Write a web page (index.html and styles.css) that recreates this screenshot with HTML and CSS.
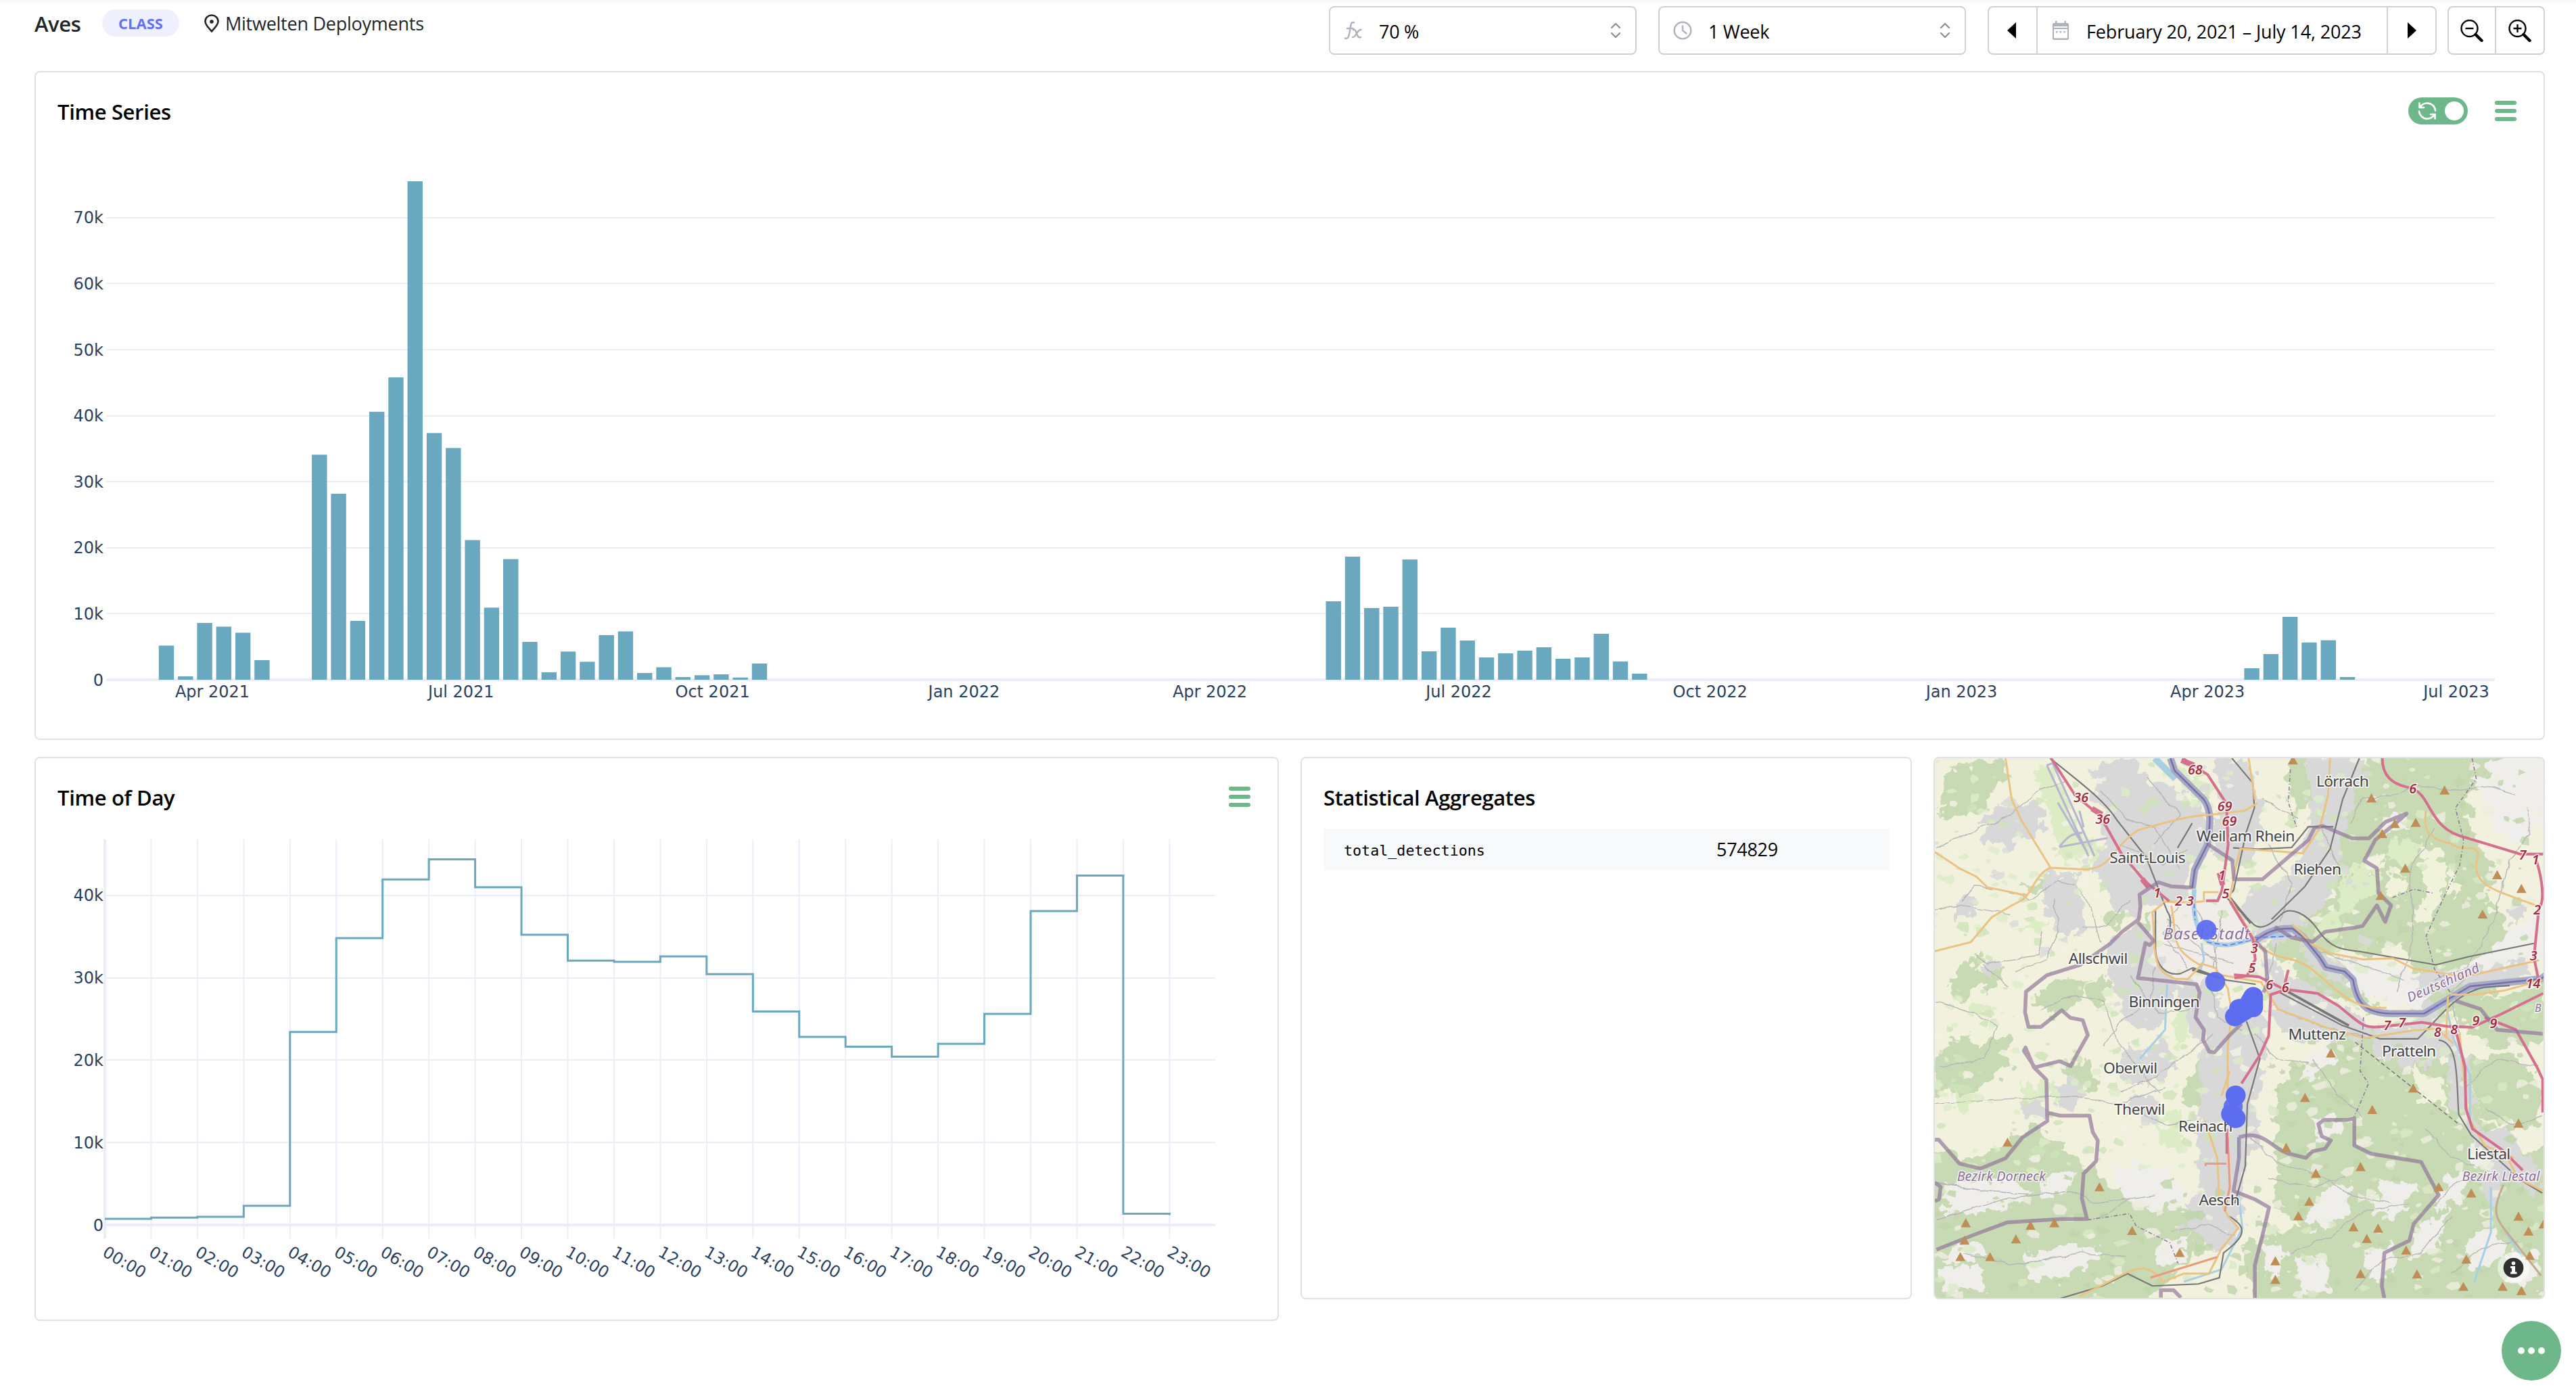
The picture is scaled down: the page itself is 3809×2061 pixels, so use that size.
FILE: index.html
```html
<!DOCTYPE html>
<html lang="en">
<head>
<meta charset="utf-8">
<title>Aves – Mitwelten Deployments</title>
<link rel="stylesheet" href="styles.css">
</head>
<body>
<header class="topbar">
  <div class="taxon">
    <span class="taxon-name">Aves</span>
    <span class="badge">CLASS</span>
    <svg class="pin" viewBox="0 0 22 27"><path d="M11 1.5C5.600 1.500 1.500 5.500 1.500 10.500c0 5.500 5 9.500 9.500 15 4.500-5.500 9.500-9.500 9.500-15 0-5-4.100-9-9.500-9z" fill="none" stroke="#212529" stroke-width="2.600"/><circle cx="11" cy="11" r="2.800" fill="#212529"/></svg>
    <span class="source">Mitwelten Deployments</span>
  </div>
  <div class="controls">
    <div class="select">
      <svg class="lead" viewBox="0 0 28 28" fill="none" stroke="#adb2bd" stroke-width="2.400" stroke-linecap="round" stroke-linejoin="round"><path d="M2 25.500c4 1 5-1 6-6L10.500 6c.6-3.500 2-4.500 4.500-3.800M5 11h8.500M14 13c3-1 3.600 1.500 5 5.500s2.400 6.500 6 5.500M25.500 13c-3-.5-5 3-6.500 5.500s-3.500 6-6 5.500"/></svg>
      <span class="value">70 %</span>
      <svg class="chev" viewBox="0 0 16 24" fill="none" stroke="#868e96" stroke-width="2.200" stroke-linecap="round" stroke-linejoin="round"><path d="M2 8l6-6 6 6M2 16l6 6 6-6"/></svg>
    </div>
    <div class="select">
      <svg class="lead" viewBox="0 0 28 28" fill="none" stroke="#adb2bd" stroke-width="2.400" stroke-linecap="round"><circle cx="14" cy="14" r="12.300"/><path d="M14 7.500V14l5.500 4.500"/></svg>
      <span class="value">1 Week</span>
      <svg class="chev" viewBox="0 0 16 24" fill="none" stroke="#868e96" stroke-width="2.200" stroke-linecap="round" stroke-linejoin="round"><path d="M2 8l6-6 6 6M2 16l6 6 6-6"/></svg>
    </div>
    <div class="group range">
      <div class="cell arrow prev"><svg viewBox="0 0 13 24"><path d="M13 0v24L0 12z"/></svg></div>
      <div class="cell dates">
        <svg class="cal" viewBox="0 0 24 28" fill="#adb2bd"><path fill-rule="evenodd" d="M4 0h2.500v3h11V0H20v3h2q2 0 2 2v21q0 2-2 2H2q-2 0-2-2V5q0-2 2-2h2zM2 8v2h20V8zM2 12v13.500h20V12z"/><path d="M5 15h2.500v2.500H5zM10.700 15h2.500v2.500h-2.500zM16.400 15h2.500v2.500h-2.500z"/></svg>
        <span class="value">February 20, 2021 – July 14, 2023</span>
      </div>
      <div class="cell arrow"><svg viewBox="0 0 13 24"><path d="M0 0v24l13-12z"/></svg></div>
    </div>
    <div class="group zoom">
      <div class="cell out"><svg viewBox="0 0 34 33" fill="none" stroke="#000"><circle cx="13.500" cy="13" r="12" stroke-width="2.400"/><path d="M7.500 13h12" stroke-width="2.400"/><path d="M22.500 22l9 9" stroke-width="4.400" stroke-linecap="round"/></svg></div>
      <div class="cell"><svg viewBox="0 0 34 33" fill="none" stroke="#000"><circle cx="13.500" cy="13" r="12" stroke-width="2.400"/><path d="M7.500 13h12M13.500 7v12" stroke-width="2.400"/><path d="M22.500 22l9 9" stroke-width="4.400" stroke-linecap="round"/></svg></div>
    </div>
  </div>
</header>
<main class="board">
  <section class="card series">
    <div class="card-head">
      <h2>Time Series</h2>
      <div class="tools">
        <div class="switch">
          <svg viewBox="0 0 28 28" fill="none" stroke="#fff" stroke-width="2.600" stroke-linecap="round" stroke-linejoin="round"><path d="M26 13.500C25.500 7 20 2.500 14 2.500c-4.500 0-8 2-10.500 6M2.500 2.500v6.500h6.500M2 14.500c.5 6.500 6 11 12 11 4.500 0 8-2 10.500-6M25.500 25.500V19H19"/></svg>
          <span class="knob"></span>
        </div>
        <div class="burger"><i></i><i></i><i></i></div>
      </div>
    </div>
    <svg class="chart" id="series" viewBox="53 194 3708 898"></svg>
  </section>
  <div class="row">
    <section class="card daytime">
      <div class="card-head">
        <h2>Time of Day</h2>
        <div class="tools"><div class="burger"><i></i><i></i><i></i></div></div>
      </div>
      <svg class="chart" id="daytime" viewBox="53 1208 1836 743"></svg>
    </section>
    <section class="card stats">
      <div class="card-head"><h2>Statistical Aggregates</h2></div>
      <div class="stat-row"><code>total_detections</code><span>574829</span></div>
    </section>
    <section class="card map">
      <svg viewBox="34 33 1457 1306" preserveAspectRatio="none">
        <defs>
          <filter id="rough" x="-5%" y="-5%" width="110%" height="110%"><feTurbulence type="fractalNoise" baseFrequency=".035" numOctaves="3" seed="4"/><feDisplacementMap in="SourceGraphic" scale="55" xChannelSelector="R" yChannelSelector="G"/></filter>
          <filter id="wobble" x="-5%" y="-5%" width="110%" height="110%"><feTurbulence type="fractalNoise" baseFrequency=".03" numOctaves="2" seed="9"/><feDisplacementMap in="SourceGraphic" scale="14" xChannelSelector="R" yChannelSelector="G"/></filter>
        </defs>
        <rect width="1600" height="1500" fill="#f1f1de"/>
        <g filter="url(#rough)">
          <g fill="#c8dab4">
            <path d="M60 60l130-30 20 60-60 40-110 20zM90 110l70-10-10 60-110 20zM250 340l110-30-20 50-110-10zM140 500l60 30-20 60-120-10zM40 740l110-60 60 30 10 60-90 70-100 10zM60 600l50-60 40 20-40 60zM260 620l80-60 60 20-40 60-50 20zM390 600l50-50 20 30-30 60zM660 780l50-20 10 80-60 40-40-30zM340 780l70-20 20 60-60 30zM430 420l60-30-20 60zM500 460l60-60-20 70z"/>
            <path d="M1100 20h300l10 70-100 30 10 110 60 60-30 90 80 80-50 140-120 60-80-20 20-90-60-70-60 30-90-20-70 40-80-10-20-60 70-30 100-60-40-120 60-100-20-70zM890 30h50l20 90-50 40-40-60zM890 500l70 0 100 90 40 60-90-40-100-20z"/>
            <path d="M850 820l100-80 130-60 70 60 150 40 40 120 40 60 90 30 120-120v400l20 270H760l60-110-30-120-20-90 40-30 100-20-60-60z"/>
            <path d="M20 980l90 20 80-20 70-60 100 60 80 80 70 20 150 60 30 60-60 60-70 80-80 50-80-20-100 60H20z"/>
            <path d="M1260 640l240-60v140l-140 10zM1300 760l120-10 60 60v120l-140-30z"/>
          </g>
          <g fill="#f0eeea">
            <path d="M1380 20h120v160l-60 60-60-30-30-90-40-30 50-30zM1410 460l80-70v120l-160 70-70-20zM1010 510l120 20 120 50-50 60-120-20-50-40zM1140 160l30 40-60 20-20-20z"/>
            <path d="M960 1080l70-20-10 80-60 40-40-30zM1110 1050l80 20-30 60-80 10zM1180 1180l80-60-20 90-60 40zM820 1200l60 20-20 70-40-10zM900 1240l80 20 10 60-80 10zM1060 1230l70-20 0 70-60 20zM1310 1190l70-20 20 70-90 40zM1330 930l90 60-20 70-90-60zM920 760l60-40 20 40-90 60zM1260 1040l50 10-10 60-70 10zM1410 1230l70 0-10 70-60 0zM940 900l60 0 0 40-50 10z"/>
            <path d="M60 1060l150-10 60 30-90 40-120 20zM290 1050l80-10-30 50-50 10zM460 1010l130 20 60 60-80 40-90-40zM80 1210l80 10-30 30-70 10zM250 1230l120-20 70 20-90 60-90 10zM50 1270l90-10 20 60H50zM560 1210l80-20-10 60-60 20z"/>
          </g>
          <g fill="#dcecc5">
            <path d="M270 60l50-10 80 210-50 30zM330 230l120 10-30 40-90-10zM1000 330l70-50 30 60-90 80zM950 420l70-20-20 60-60 10zM1130 230l70 0-30 60-60-10zM480 560l30-20 10 90-40 20zM620 640l40 20-40 90-20-30zM610 40l70 60 20 50-60-30zM100 640l60-20 10 40zM240 830l80-20 10 40-80 20zM70 830l60 20-20 50zM560 900l60-20 20 90-60 10zM230 440l80-10-20 30zM790 420l50 0-20 40z"/>
          </g>
          <g fill="#f1f2dc">
            <path d="M1190 240l60 10 10 100-50 90-20-20 20-80zM1120 300l50 30-20 40-40-20zM1060 270l50 10-20 30zM930 40l50 0-20 130-30-20zM1260 300l40 40-30 30zM880 700l70-20-20 60-40 10zM1180 780l70 40 20 70-90-40zM700 1030l60 20-10 50zM120 540l50-50 30 30-40 40zM110 700l60-40 30 20-60 50z"/>
          </g>
          <g fill="#d8d8d8">
            <path d="M400 60l110-30 40 60 80 20 60 80 0 80-50 30 0 90-110-10-20 40-50-30-40-90-10-40 40-10-20-90zM930 30h130l-40 160-50 200-120 100-100-30 30-100 110-40 40-120zM700 40l80-10 40 130-10 80-30 60-80-40-20-70 50-30z"/>
            <path d="M420 500l110-60 50 60 20 100-40 100-60-20-50-130zM470 750l110-40 30 70-60 50-80-30zM500 850l60 0 10 70-70-20zM560 560l110-10 50 60-10 110-60-20-30-80zM690 640l130-10 10 90-30 160-20 120-20 200-60 30-70-60 40-90-10-140z"/>
            <path d="M820 520l110 60 130 90 20 40-190 10-50-60zM900 480l100 40 30 70-90-40zM1080 680l190 10 10 60-110 30-90-30zM1180 560l140-20 140-20-10 50-160 20-100 20zM1270 720l40 40 20 200-30-40-40-100zM1310 930l90 0 90 100-20 60-100-60zM1340 1040l60-20-20 120-40-60zM640 1110l90 20-20 60-70-20zM720 880l80-20 20 110-50 40-40-30z"/>
            <path d="M160 170l70-30 60 10 0 60-60 40-90-20zM290 310l80 0 10 60-40 60-50-30zM90 370l30-20 10 60-50 20zM320 370l60-20 10 100-60 10zM140 530l40 0-10 40zM1400 400l40-20-10 60zM320 820l70-10-10 60-50 10zM240 870l60-10 0 40-60 0zM1170 640l60-20 10 60-60 10z"/>
          </g>
          <path d="M560 400l100-30 80 0 60 90 10 100-60 20-80-10-50 10-60-60-10-70z" fill="#f0ece8"/>
        </g>
        <g id="patches"></g>
        <g fill="none" stroke="#b4b4b6" stroke-width="2.200" filter="url(#wobble)">
          <path d="M34 250l70-30 110-50 70-60 60-20M100 380l30-40 100 20 30 20 70-50 40 10 40 60 20 80M34 400l60-10 120 20M320 370l10 80-30 70-70 30M390 440l50 0 60-60M290 450l-10 60-120 20-30-20M150 530l60 60M34 620l90 30 60 30-30 80-110 20M34 870l120-10 200-10 120 20 110-40M290 640l70-30 80 10 30 100 100 120M480 840l90-40 130-100M440 730l40-60 70-50 10-80M520 890l70 30 60-10M690 560l20 100 60 30M660 400l40 70 10 80M720 400l-20 140M590 420l120 110M580 480l170 50M620 380l-40 80 60 80M830 240l60 100-30 90M960 200l50 120M900 180l-80-50M1030 190l30-60 80-10 40-20 100 10 80-10 60 20M1450 150l10 70-50 60-40 150-60 110-80 30M1230 200l-60 110 10 160-40 130M900 470l60 30 200 70M850 640l100 40 130 30M850 480l-20 100M1330 540l-60 60 20 110M40 1150l160-50 160-20 60 30 140-20M34 1060l120 20 130 10M100 1230l120 30 160-30 110 10M420 1150l80-50M790 950l60 60 100 30 80 50 100 20M830 1050l100 20 90-20M880 1230l100-40 80-60 110-20M1040 1320l60-70 100-20 70-90M1270 1280l70-60 90-20M1300 830l80-70 100 20M1350 880l70 40 70-20M1210 930l60 70 60 20M940 760l60 90 60 50M600 1180l90-20 60 30M800 700l50 60 80 10M500 560l70 90 80-10M430 110l60 70 70 20 60 100M540 80l80 90-60 70M480 240l100 50 60-40M1230 1120l50-60 80-10"/>
        </g>
        <g fill="none" stroke="#b7b6d0" stroke-width="5"><path d="M302 50l100 220M316 45l100 225M302 50l14-5M332 248c25-35 40-32 55-35M332 248l115-22M328 140l70 120M380 160l10 40"/></g>
        <g fill="none" stroke="#a9cfe2">
          <path d="M655 350c-6 60 6 110 40 130 40 12 70 0 110-14l80-6" stroke-width="11"/><path d="M672 480l6 40-10 30M760 1080l10 90-50 100-90 30M1255 620l20 90 40 90 0 120M1365 1070l0 110-40 120M590 580l-5 110-60 70M760 950l0 80M1400 1180l40 60" stroke-width="5"/>
          <path d="M560 33l50 50" stroke-width="16"/>
        </g>
        <g fill="none" stroke-linejoin="round">
          <path d="M598 33l10 30 70 70c20 30 15 60 8 110l-30 60-6 45M800 475c40-30 60-30 90-30l25 20 40 50 15 24 45 10 20 20c10 60 30 80 90 82h80l110-66 170-18 46-36" stroke="#a9a8c6" stroke-width="17"/>
          <path d="M598 33l10 30 70 70c20 30 15 60 8 110l-30 60-6 45M800 475c40-30 60-30 90-30l25 20 40 50 15 24 45 10 20 20c10 60 30 80 90 82h80l110-66 170-18 46-36" stroke="#7471a8" stroke-width="4"/>
        </g>
        <g fill="none" stroke="#6f7cf0" stroke-width="3" stroke-dasharray="12 7"><path d="M653 365l4 60M685 478l50 8 60-14M800 467l100-4M1225 640l40-26"/></g>
        <g fill="none" stroke="#777" stroke-width="3.500">
          <path d="M310 33c60 50 130 100 160 150l70 90 50 130c15 20 5 60-2 60M562 400v90c0 50 30 70 60 64l30-14 80 30 70 10M745 33l50 60 4 60-20 60-30 140-16 18 60 60c20 25 50 0 70-20s60-5 90 40 60 45 100 50l180 32 80-20 155-32M1050 33l-40 100-30 120-60 90-80 80M780 670l32 90-30 110-5 150-25 90M860 600l150 80 90 32h90c60-60 90-110 160-125l60-4M1240 715c50 5 42 100 48 180l30 50 120 110 50 30M650 190l-35 60M748 250l60 3 80-4 40-50h60M735 1140c60 30 30 60-10 90l-10 60-50 15-110 5-60-30-60 30-100 30"/>
          <path d="M1040 720l250 200" stroke-dasharray="10 6" stroke-width="2.500"/><path d="M650 545l70 20M740 370l50 62M865 590l160 90" stroke-width="6"/>
        </g>
        <g fill="none" stroke="#eac382" stroke-width="4.800">
          <path d="M203 33l15 100 23 50 70 115 60 3c90 10 80-50 150-94 70-20 120-35 170-37l85-10 30-18M34 260l60 40 40 20 25 25 95 20M310 298c-40 20-40 60-70 80l-20 10-50 30-50 60-86 22M254 365l-10-4M580 380l70 2 28-3v-22h35M580 385l-25 20 5 90c5 50 20 60 50 72h30l30-32M600 390c15 70-10 100 72 145M670 530l35 10 30 50 10 60-10 80v120M785 33l15 100M980 33l-5 90-20 80-40 60-80-6-70-5-10 40-15 80 65 110c60 50 70 20 130 60 70 60 100 100 180 95M890 435l50 50 40 20 80 15 70-3 50 25 120 20 180-40M1210 160c-10 50 10 70 60 80 20 20 60 0 65 25-20 60 20 80 60 95l80 30M705 555l110 20 40 65 130 50 80 20 110-18 60-5 40 36M1262 610l-4 95M1488 570l-90 25-70 10-60 0M740 790l-20 60M680 910l30 90 5 100 20 40 25 30-40 50-30 60-60 0-50 20c-40-60-90-20-130 0l-70 35M1290 700l20 200 40 70 70 30M1400 990l30 60 60 30"/>
          <path d="M550 1290l160-50M735 950l5 120-12 60M682 1020v-6h50M760 560h40" stroke="#e99b7c" stroke-width="5"/><path d="M1395 1065c-30 70-20 80 20 130l70 90" stroke="#c5ab8d"/>
        </g>
        <g fill="none" stroke="#d4708d" stroke-width="6.500">
          <path d="M312 33l58 90 60 50 50 90 55 66 60 50M627 33l60 40 45 70 4 100-15 110-10 25h-28M741 380l54 90 6 50-20 40-30 5M750 557l60 5 60 30 80 10 50 30c60 50 60 55 110 50l90-10 60 10 60 2 70-32 100-50M880 545l-12 50-30 10-5 100-20 45-45 70M1105 33c0 40 20 64 70 72 50 20 40 100 130 120l130 40h55M1472 275c20 60 20 110 8 120l-12 120 12 60M1283 700l20 80 2 100 16 50 70 50 50 50M1350 660l75 30 50 90 14 30v80M733 930v60"/>
          <path d="M624 38l30 12M410 155l24 14M530 325l16 20M715 310l8 30" stroke-width="13"/>
        </g>
        <g fill="none" stroke="#8f7599" stroke-linejoin="round">
          <g id="borders"><path d="M649 346l-50-3-30-10-45 30 2 30-4 30-40 30-30 30-70 50-80 25-50 40-2 50 8 35 30 0 50-40 20 18 30 6 12 36-25 45-16 30-26-12-60 15-26-40 4-8 20 48 30 30 2 100-60 40-40 50-60 25-50-12-50-58-40 0M300 890l34 8h70l8 40 12 20-4 50-30 30-4 60 12 50h-60l-130 8-80 30-90 36M34 1060l14 10-4 30-10 5M520 430l38 45-10 10-10-5-18 85 140 15 8 20-10 60 20 30-2 25 15 28 12 2 35-40 30-30M686 240l60 40 4 46h68l110-95 15-30 20-4 70 30h40l40-40 50-20-15 14-60 50-26 50 30 18 4 60 30 30-14 40-20-40-34 50-20 4-70 10-30 24-50-10-40-26M800 475l25 25 5 80-10 20M762 950c60-20 80 30 120 40l40 10 16-16 30-6 14-20-22-10-8-30 14-10h56l16-4v66l40 20 120 20 42 80-60 70-10 40-60 30-6 80 10 50M762 950v50l-8 50-5 30 50 20 35 20-14 60-20 80v90M575 1338v-18h30l18 18M1280 620l60 20 40 50 110 10"/></g>
          <path d="M1320 33l10 50-50 70 20 80-10 60-30 60-50 110 20 80 40 60M1060 660l-8 130 20 30-25 60-10 20M400 1150l100-15 16 30 80 40 20 50M885 60l-5 80 20 60M1130 370l50-20 50 10" stroke-width="2.500" stroke-dasharray="9 5 2 5"/>
        </g>
        <g id="peaks" fill="#bf8d55"></g>
        <g class="ref" id="refs"></g>
        <g class="town" id="towns"></g>
        <g class="area"><text x="581" y="471" class="big" textLength="207">Basel-Stadt</text><text x="87" y="1056" textLength="212">Bezirk Dorneck</text><text x="1296" y="1056" textLength="186">Bezirk Liestal</text><text x="1170" y="624" transform="rotate(-24 1170 624)" textLength="186">Deutschland</text><text x="1470" y="647" class="edge">B</text></g>
        <g fill="#5c6df0"><g opacity=".93"><circle cx="684" cy="448" r="24"/><circle cx="705" cy="574" r="24"/><circle cx="748" cy="876" r="23"/></g><path d="M752 658l26-16 18-32v26l-34 3" fill="none" stroke="#5c6df0" stroke-width="47" stroke-linecap="round" stroke-linejoin="round"/><circle cx="754" cy="849" r="24"/><circle cx="743" cy="894" r="24"/><circle cx="754" cy="904" r="24"/></g>
        <circle cx="1419" cy="1266" r="38" fill="#fff" opacity=".5"/><circle cx="1419" cy="1266" r="24" fill="#303030"/><g fill="#fff"><circle cx="1419" cy="1255" r="4.500"/><path d="M1412 1262h11v14h4v5h-15v-5h3v-9h-3z"/></g>
      </svg>
    </section>
  </div>
</main>
<div class="fab"><i></i><i></i><i></i></div>
<script src="charts.js"></script>
</body>
</html>
```

FILE: styles.css
```css
* { box-sizing: border-box; }
body { margin: 0; background: #fff; height: 2061px; overflow: hidden; font: 27px/40px "Open Sans", "Noto Sans", sans-serif; color: #000; position: relative; }
.topbar { height: 105px; padding: 0 46px 0 51px; display: flex; justify-content: space-between; align-items: flex-start; background: linear-gradient(#f6f6f6, #fff 7px); }
.taxon { display: flex; align-items: center; height: 40px; margin-top: 14px; color: #212529; }
.taxon-name { font-size: 31px; font-weight: 600; width: 100px; letter-spacing: -.4px; padding-top: 2px; }
.badge { width: 114px; height: 40px; border-radius: 20px; background: #eef0fe; color: #6270f2; font-size: 22px; font-weight: 700; text-align: center; }
.pin { width: 22px; height: 27px; margin: 0 9px 0 37px; }
.source { letter-spacing: -.25px; white-space: nowrap; padding-top: 1px; }
.controls { display: flex; margin-top: 9px; height: 72px; }
.select, .group { border: 2px solid #cfd0da; border-radius: 8px; display: flex; align-items: center; background: #fff; }
.select { width: 455px; margin-right: 32px; padding: 0 21px 0 20px; }
.lead { width: 28px; height: 28px; margin-right: 24px; }
.value { flex: 1; padding-top: 4px; letter-spacing: -.3px; white-space: nowrap; }
.chev { width: 16px; height: 24px; }
.range { width: 664px; margin-right: 16px; }
.zoom { width: 144px; }
.cell { height: 100%; display: flex; align-items: center; justify-content: center; }
.cell + .cell { border-left: 2px solid #cfd0da; }
.arrow { width: 72px; }
.arrow.prev { width: 70px; padding-right: 3px; }
.arrow svg { width: 13px; height: 24px; }
.dates { flex: 1; padding-left: 22px; }
.dates .value { letter-spacing: -.15px; }
.cal { width: 24px; height: 28px; margin-right: 26px; }
.zoom .cell { flex: 1; }
.zoom .out { flex: 0 0 68px; }
.zoom svg { width: 34px; height: 33px; }
.board { padding: 0 46px 0 51px; display: flex; flex-direction: column; gap: 25px; }
.card { border: 2px solid #dee2e6; border-radius: 8px; background: #fff; overflow: hidden; }
.card-head { display: flex; justify-content: space-between; align-items: center; height: 60px; margin: 27px 40px 0 32px; }
h2 { margin: 0; font-size: 31px; font-weight: 600; letter-spacing: -.35px; padding-top: 1px; }
.tools { display: flex; align-items: center; gap: 40px; }
.switch { width: 88px; height: 40px; border-radius: 20px; background: #6eb78a; display: flex; align-items: center; padding: 0 6px 0 14px; justify-content: space-between; }
.switch svg { width: 28px; height: 28px; }
.knob { width: 28px; height: 28px; border-radius: 50%; background: #fff; }
.burger { width: 32px; display: grid; gap: 6px; }
.burger i { height: 6px; border-radius: 3px; background: #6eb78a; }
.chart { display: block; width: 100%; }
.series { height: 989px; }
.series .chart { height: 898px; }
.row { display: grid; grid-template-columns: 1840px 904px 904px; gap: 32px; align-items: start; }
.daytime { height: 834px; }
.daytime .chart { height: 743px; }
.stats, .map { height: 802px; }
.stat-row { margin: 17px 32px 0; height: 61px; background: #f8f9fb; display: grid; grid-template-columns: 551px 1fr; align-items: center; padding-left: 30px; }
.stat-row code { font: 21.700px/40px "DejaVu Sans Mono", monospace; padding-top: 4px; }
.stat-row span { letter-spacing: -.3px; }
.map svg { display: block; width: 100%; height: 100%; }
.chart text { font: 24px "DejaVu Sans", Verdana, sans-serif; fill: #2a3f5f; }
.grid { stroke: #ebeef9; stroke-width: 2; fill: none; }
.zero { stroke: #ebeef9; stroke-width: 4; }
.bar { fill: #69a8be; }
.step { stroke: #69a8be; stroke-width: 3; fill: none; }
.town text, .area text, .ref text { font-family: "Noto Sans", sans-serif; paint-order: stroke; stroke-linejoin: round; stroke: #fff; stroke-opacity: .75; }
.town text { font-size: 37px; fill: #444; stroke-width: 6px; text-anchor: middle; }
.area text { font-size: 32px; font-style: italic; fill: #8d6f9c; stroke-width: 5px; }
.area .big { font-size: 39px; }
.area .edge { font-size: 26px; }
.ref text { font-size: 32px; font-weight: 600; font-style: italic; fill: #a03040; stroke-width: 5px; text-anchor: middle; }
#borders { stroke-width: 9; stroke-opacity: .68; }
.fab { position: absolute; left: 3699px; top: 1953px; width: 88px; height: 88px; border-radius: 50%; background: #6eb78a; display: flex; align-items: center; justify-content: center; gap: 5px; }
.fab i { width: 10px; height: 10px; border-radius: 50%; background: #fff; }
```

FILE: charts.js
```js
// Weekly detections: [week index, y of the bar top]
const weeks = [[0,954.5],[1,1000],[2,921],[3,926.5],[4,935.5],[5,976],[8,672.3],[9,730],[10,918],[11,608.8],[12,558],[13,268],[14,640.3],[15,662.4],[16,798.5],[17,898.4],[18,826.6],[19,949],[20,994],[21,963.3],[22,978.4],[23,939],[24,933.5],[25,995],[26,986.5],[27,1001],[28,998.3],[29,997],[30,1001.7],[31,981],
  [61,889],[62,823],[63,899],[64,897],[65,827.2],[66,963],[67,928],[68,947],[69,972],[70,966],[71,962],[72,957],[73,974],[74,972],[75,937],[76,978],[77,996],
  [109,988],[110,967],[111,912],[112,950],[113,946.6],[114,1001]];
const hours = [1802,1800.2,1798.9,1782.7,1525.7,1387,1300.3,1270.4,1311.8,1382,1420.2,1422,1414.1,1440.2,1495.6,1532.9,1547.4,1562.2,1543.3,1498.9,1346.9,1294.6,1794.5];
let s = '';
for (let i = 1; i < 8; i++) {
  const y = Math.round(1005 - i * 97.6);
  s += `<path class="grid" d="M157 ${y}H3689"/>`;
}
s += '<path class="zero" d="M157 1005H3689"/>';
for (let i = 0; i < 8; i++) s += `<text x="153" y="${1013.5 - i * 97.6}" text-anchor="end">${i ? i + '0k' : 0}</text>`;
for (const [i, y] of weeks) s += `<rect class="bar" x="${234.8 + i * 28.29}" y="${y}" width="22.4" height="${1005 - y}"/>`;
const months = [['Apr 2021',314],['Jul 2021',681.8],['Oct 2021',1053.6],['Jan 2022',1425.4],['Apr 2022',1789],['Jul 2022',2157],['Oct 2022',2528.7],['Jan 2023',2900.5],['Apr 2023',3264.2],['Jul 2023',3632]];
for (const [t, x] of months) s += `<text x="${x}" y="1030.5" text-anchor="middle">${t}</text>`;
document.getElementById('series').innerHTML = s;

s = '';
const hx = i => 155 + i * 68.45;
for (let i = 1; i < 24; i++) s += `<path class="grid" d="M${hx(i)} 1241V1831"/>`;
for (let i = 1; i < 5; i++) s += `<path class="grid" d="M155 ${Math.round(1811 - i * 121.8)}H1797"/>`;
s += '<path class="zero" d="M155 1241V1831M155 1811H1797" />';
for (let i = 0; i < 5; i++) s += `<text x="153" y="${1819.5 - i * 121.8}" text-anchor="end">${i ? i + '0k' : 0}</text>`;
let d = `M155 ${hours[0]}`;
hours.forEach((y, i) => { d += `V${y}H${hx(i + 1)}`; });
s += `<path class="step" d="${d}v2"/>`;
for (let i = 0; i < 24; i++) {
  const x = hx(i) - 5;
  s += `<text x="${x}" y="1856" transform="rotate(30 ${x} 1856)">${String(i).padStart(2, '0')}:00</text>`;
}
document.getElementById('daytime').innerHTML = s;

const towns = [['Lörrach',1010,102,126],['Weil am Rhein',778,234,236],['Riehen',950,315,114],['Saint-Louis',543,286,182],['Allschwil',425,531,142],['Binningen',583,635,170],['Muttenz',949,714,138],['Pratteln',1169,755,130],['Oberwil',502,795,130],['Therwil',524,895,122],['Reinach',682,936,130],['Liestal',1360,1003,104],['Aesch',715,1114,98]];
document.getElementById('towns').innerHTML = towns.map(([t, x, y, w]) => `<text x="${x}" y="${y}" textLength="${w}">${t}</text>`).join('');
const refs = [['36',384,139],['36',436,192],['68',657,72],['69',728,160],['69',739,196],['1',721,328],['5',730,371],['1',566,370],['2',618,389],['3',645,390],['3',799,505],['5',793,551],['6',835,593],['6',873,599],['7',1117,691],['7',1152,684],['8',1237,707],['8',1277,700],['9',1329,680],['9',1371,686],['6',1178,118],['7',1441,278],['1',1472,290],['2',1476,411],['3',1467,522],['14',1466,590]];
document.getElementById('refs').innerHTML = refs.map(([t, x, y]) => `<text x="${x}" y="${y}">${t}</text>`).join('');
const peaks = [[891,37],[1254,110],[1079,129],[1185,188],[1135,191],[1105,215],[1160,299],[1380,315],[1438,348],[1101,365],[1345,410],[982,746],[1179,831],[920,854],[1081,883],[1431,916],[875,975],[208,962],[428,1070],[946,1037],[1053,1021],[1240,1070],[1318,1085],[930,1105],[904,1140],[1431,1141],[1455,1177],[1491,1160],[1036,1167],[1095,1170],[1068,1195],[1162,1223],[1306,1245],[1458,1236],[849,1249],[849,1294],[1053,1280],[1188,1281],[1299,1311],[1393,1311],[1438,1321],[108,1157],[105,1199],[95,1239],[166,1239],[228,1196],[263,1163],[320,1157],[506,1176],[620,1229]];
document.getElementById('peaks').innerHTML = peaks.map(([x, y]) => `<path d="M${x} ${y - 11}l12 22h-24z"/>`).join('');

// Small fields, hedges and gardens scattered over the land cover
let seed = 7;
const rnd = () => (seed = (seed * 16807) % 2147483647) / 2147483647;
let p = '';
for (let i = 0; i < 900; i++) {
  const x = 34 + rnd() * 1457, y = 33 + rnd() * 1306, k = rnd();
  const r = 3 + rnd() * 9;
  const south = y > 700 && x > 820 || y > 1040 || x > 1080 && y < 560;
  const fill = south ? (k < .4 ? '#eeeedf' : k < .75 ? '#bfd5a9' : '#d9e8c6') : (k < .35 ? '#cfe3b8' : k < .7 ? '#ddecc8' : k < .85 ? '#f3f2e4' : '#d9d9d8');
  let q = '';
  for (let a = 0; a < 6; a++) {
    const m = r * (.5 + rnd());
    q += `${a ? 'L' : 'M'}${(x + Math.cos(a * 1.05) * m * 1.4).toFixed(1)} ${(y + Math.sin(a * 1.05) * m).toFixed(1)}`;
  }
  p += `<path d="${q}z" fill="${fill}" opacity=".8"/>`;
}
document.getElementById('patches').innerHTML = p;
```
